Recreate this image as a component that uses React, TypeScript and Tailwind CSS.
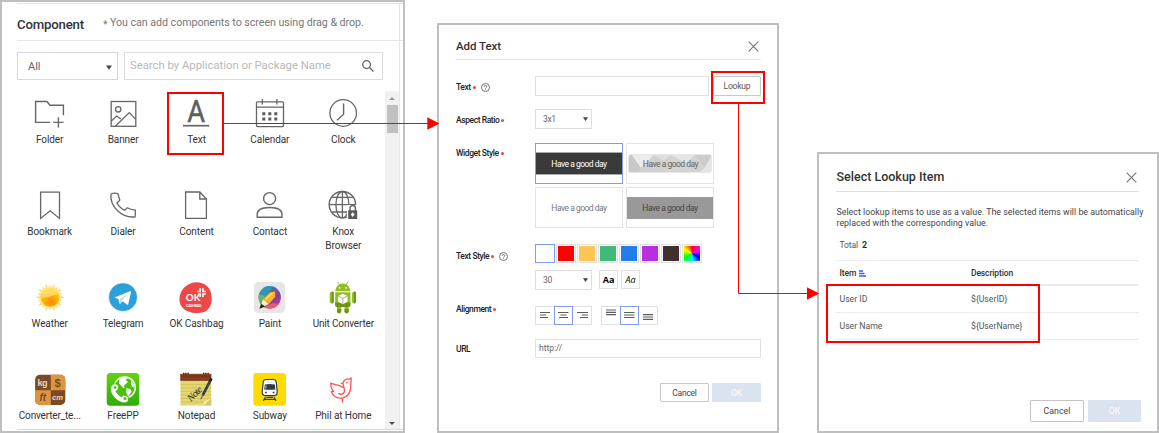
import React from "react";

const ROBOTO = "font-['Roboto','Liberation_Sans',sans-serif]";

function Icon({ children }: { children: React.ReactNode }) {
  return (
    <svg width="34" height="34" viewBox="0 0 34 34" fill="none" stroke="#666" strokeWidth="1.3" className="shrink-0 overflow-visible">
      {children}
    </svg>
  );
}

const rays = Array.from({ length: 20 }, (_, i) => {
  const a = (i * Math.PI) / 10;
  const r = i % 2 ? 12.6 : 14.6;
  const p = (rad: number, ang: number) => `${(17 + rad * Math.cos(ang)).toFixed(2)},${(17.3 + rad * Math.sin(ang)).toFixed(2)}`;
  return `${p(9.5, a - 0.15)} ${p(r, a)} ${p(9.5, a + 0.15)}`;
}).join(" ");

const apps: { label: string; icon: React.ReactNode; tracking?: string }[] = [
  {
    label: "Folder",
    icon: <path d="M17 26.4H2.6V5.5H14L17 9.3H30.4V19.3M20.3 26.4h10.2M25.4 21.2v10.4" strokeWidth="1.4" />,
  },
  {
    label: "Banner",
    icon: (
      <>
        <rect x="5.2" y="5.5" width="24.6" height="24.8" />
        <circle cx="12.2" cy="13.3" r="2.7" />
        <path d="M5 25.3l5.8-5.2 4 3M9.3 30.2l14-13.6 6.4 6.8" />
      </>
    ),
  },
  {
    label: "Text",
    icon: (
      <>
        <text x="8.2" y="26.4" fontSize="31.5" fontFamily="Roboto" fontWeight="400" fill="#5f5f5f" stroke="#5f5f5f" strokeWidth=".5" textLength="17.8" lengthAdjust="spacingAndGlyphs">A</text>
        <path d="M4 29.7h26.2" strokeWidth="1.7" />
      </>
    ),
  },
  {
    label: "Calendar",
    icon: (
      <>
        <rect x="3.5" y="5.8" width="27" height="24.8" rx="1" />
        <path d="M3.5 11.2h27M9.3 3v5.5M23.9 3v5.5" />
        <path d="M9.3 17.7h15M9.3 23h15" stroke="#5a5a5a" strokeWidth="3" strokeDasharray="3 3" />
      </>
    ),
  },
  {
    label: "Clock",
    icon: (
      <>
        <circle cx="17.2" cy="17" r="13.3" />
        <path d="M17.6 7.5v10.8L11 24.2" strokeWidth="1.4" />
      </>
    ),
  },
  { label: "Bookmark", icon: <path d="M7.6 4.2h18.9v26.2l-9.4-7.6-9.5 7.6z" /> },
  {
    label: "Dialer",
    icon: <path d="M5 6Q8.5 4.5 11.8 5.5L13.8 12.2 11 14.8Q13 19.5 18.6 22.4L21.3 19.8Q24 21.6 29.4 22.2L29.2 28.8C16 30.5 3.5 18.5 5 6Z" strokeLinejoin="round" />,
  },
  { label: "Content", icon: <path d="M6.6 4h14.2l6.6 7v19.4H6.6zM20.8 4v7h6.6" /> },
  {
    label: "Contact",
    icon: (
      <>
        <circle cx="16.6" cy="10.6" r="6" strokeWidth="1.4" />
        <path d="M4.2 29.3v-2.8c0-4.5 5-7 12.4-7s12.4 2.5 12.4 7v2.8z" strokeWidth="1.4" strokeLinejoin="round" />
      </>
    ),
  },
  {
    label: "Knox Browser",
    icon: (
      <>
        <circle cx="16.4" cy="16.7" r="13.2" strokeWidth="1.4" />
        <ellipse cx="16.4" cy="16.7" rx="6.5" ry="13.2" />
        <path d="M16.4 3.5v26.5M3.2 16.7h26.4M5.5 9.4h22M5.5 24h17" />
        <rect x="21" y="17" width="11" height="15" fill="#fff" stroke="none" />
        <path d="M24 23v-2.8a2.7 2.7 0 0 1 5.4 0v2.8" strokeWidth="1.5" />
        <rect x="22.2" y="22.3" width="9" height="8.7" fill="#5a5a5a" stroke="none" />
        <path d="M26.7 24.3l1.9 2.3-1.9 2.3-1.9-2.3z" fill="#fff" stroke="none" />
      </>
    ),
  },
  {
    label: "Weather",
    icon: (
      <>
        <defs>
          <radialGradient id="sun" cx="0.55" cy="0.75" r="0.75">
            <stop offset="0" stopColor="#ff8500" />
            <stop offset="0.5" stopColor="#ffb200" />
            <stop offset="1" stopColor="#ffd83a" />
          </radialGradient>
          <linearGradient id="glare" x1="0" y1="0" x2="0.2" y2="1">
            <stop offset="0" stopColor="#ffe564" />
            <stop offset="1" stopColor="#ffd05a" />
          </linearGradient>
        </defs>
        <g stroke="none">
          <polygon points={rays} fill="#f8d35a" />
          <circle cx="17" cy="17.3" r="10.8" fill="#ffe98b" />
          <circle cx="17" cy="17.3" r="9.4" fill="url(#sun)" />
          <path d="M8 17.5a9.2 9.2 0 0 1 18 -2.8c-6-1-9 4-18 2.800z" fill="url(#glare)" />
        </g>
      </>
    ),
  },
  {
    label: "Telegram",
    icon: (
      <g stroke="none">
        <circle cx="17" cy="17.6" r="15" fill="#eceff1" />
        <circle cx="17" cy="17.2" r="13.9" fill="#2ba0da" />
        <path d="M8.500 17.500L24 11.200c.8-.3 1.200 0 1 .9L22.300 24c-.2.9-.8 1-1.500.5l-4.200-3.200-2.100 2.100c-.5.5-1.100.3-1.200-.4l-.9-4.100-3.800-1.100c-.5-.1-.5-.2-.1-.3z" fill="#fff" />
        <path d="M13.300 22.900l.5-3.800 8-5.400-6 6.700-1.100 3.100c-.5.5-1.300.1-1.400-.6z" fill="#b9d9ea" />
      </g>
    ),
  },
  {
    label: "OK Cashbag",
    icon: (
      <g stroke="none">
        <path d="M17 2.200C25 2 32.500 7 32.600 17c.1 7.500-1.500 12-7 14.800C17 35 3 32.500.7 22 -1 11 8 2.400 17 2.200z" fill="#ee4747" />
        <text x="6.8" y="21.2" fontSize="10" fontFamily="Lato" fontWeight="700" fill="#fff" textLength="14.5" lengthAdjust="spacingAndGlyphs">OK</text>
        <text x="7" y="26.5" fontSize="3.9" fontFamily="Roboto" fontWeight="500" fill="#fff" textLength="15.5">CASHBAG</text>
        <path d="M21.200 8.200v3.300h-3M23.900 8.200v3.300h3M21.200 17v-3h-2.300M23.900 17v-3h3" stroke="#fff" strokeWidth="1.6" />
      </g>
    ),
  },
  {
    label: "Paint",
    icon: (
      <g stroke="none">
        <defs>
          <linearGradient id="paint-a" x1="0" y1="0" x2="1" y2="1">
            <stop offset="0" stopColor="#2d9fc0" />
            <stop offset="0.35" stopColor="#4d70a8" />
            <stop offset="0.65" stopColor="#8a3d9c" />
            <stop offset="1" stopColor="#e0427c" />
          </linearGradient>
        </defs>
        <rect x="1" y="2" width="31" height="31" rx="4.5" fill="#e6e6e6" />
        <circle cx="16.7" cy="17.3" r="11.2" fill="url(#paint-a)" />
        <path d="M6.200 13.800A11.200 11.200 0 0 1 20 6.600L13 17z" fill="#2f9bb8" opacity=".8" />
        <path d="M6 14.500l6 1-4 8.500A11.200 11.200 0 0 1 6 14.500z" fill="#65b66c" />
        <path d="M11 27l9-4 6 1a11.200 11.200 0 0 1-15 3z" fill="#ee5a72" />
        <path d="M7 28.300l3-9.400 6 5z" fill="#fff0b5" />
        <path d="M10 18.900l7.300-6.700 4.700-.7.300 5.200-6.300 7.200-1.600-2-2.200-.8z" fill="#ffb320" />
        <path d="M12.600 19.300l7-6.500" stroke="#ffe46c" strokeWidth="1.3" />
        <path d="M6.400 28.700l1.700-5 4 2.800z" fill="#202020" />
      </g>
    ),
  },
  {
    label: "Unit Converter",
    tracking: "tracking-[-0.17px]",
    icon: (
      <g stroke="none" fill="#94bf24">
        <path d="M9.200 11.200a7.600 7.800 0 0 1 15.200 0z" />
        <path d="M12 2.300l2 3.200M21.600 2.300l-2 3.200" stroke="#94bf24" strokeWidth="1" strokeLinecap="round" />
        <path d="M9.200 12.300h15.200v13a1.800 1.800 0 0 1-1.800 1.800H11a1.800 1.800 0 0 1-1.800-1.800z" />
        <rect x="3.7" y="11.5" width="4" height="12" rx="2" />
        <rect x="26" y="11.5" width="4" height="12" rx="2" />
        <rect x="11" y="25" width="4.2" height="8.3" rx="2" />
        <rect x="18.5" y="25" width="4.2" height="8.3" rx="2" />
        <path d="M9.200 22.500h15.200v2.800a1.800 1.800 0 0 1-1.800 1.800H11a1.800 1.800 0 0 1-1.800-1.800zM5.800 11.800h1.900v9.600a2 2 0 0 1-1.900 2zM28 11.800h2v9.600a2 2 0 0 1-2 2zM11 29h4.200v2.300a2 2 0 0 1-4.200 0zM18.500 29h4.200v2.300a2 2 0 0 1-4.200 0z" fill="#6c9416" />
        <circle cx="13.5" cy="7.9" r=".8" fill="#fff" />
        <circle cx="20.1" cy="7.9" r=".8" fill="#fff" />
        <path d="M16.800 13.700l4.700 2.200v5.900l-4.700 2.500-4.700-2.500v-5.900z" fill="#fff" />
        <path d="M12.100 16l4.700 2.400 4.700-2.400M16.800 18.400v5.700" stroke="#9ba886" strokeWidth=".9" fill="none" />
      </g>
    ),
  },
  {
    label: "Converter_te...",
    tracking: "tracking-[-0.17px]",
    icon: (
      <g stroke="none">
        <defs>
          <clipPath id="conv"><rect x="2.1" y="2.8" width="30.2" height="30.2" rx="5" /></clipPath>
        </defs>
        <g clipPath="url(#conv)">
          <rect x="2" y="2" width="31" height="31" fill="#7a4a26" />
          <path d="M17.800 2H33v16.200H17.800zM2 18.200h15.800V33H2z" fill="#dc963f" />
        </g>
        <g fontFamily="Liberation Sans" fontWeight="700">
          <text x="4.6" y="13.6" fontSize="9" fill="#ead7bd" textLength="10">kg</text>
          <text x="21.4" y="15.2" fontSize="11" fill="#7a4a26">$</text>
          <text x="6.5" y="29" fontSize="10" fontStyle="italic" fill="#7a4a26">ft</text>
          <text x="19" y="28" fontSize="8" fontStyle="italic" fill="#ead7bd" textLength="11" lengthAdjust="spacingAndGlyphs">cm</text>
        </g>
      </g>
    ),
  },
  {
    label: "FreePP",
    icon: (
      <g stroke="none">
        <defs>
          <linearGradient id="fpp" x1="0" y1="0" x2="0" y2="1">
            <stop offset="0" stopColor="#65d30b" />
            <stop offset="1" stopColor="#2fac0a" />
          </linearGradient>
        </defs>
        <rect x=".7" y="1" width="32.6" height="32.7" rx="3.5" fill="url(#fpp)" />
        <circle cx="18.7" cy="15.6" r="10.6" stroke="#fff" strokeWidth="1.4" fill="#4cc00a" />
        <path d="M13.500 7.200l4-1.800 4 .6-1.800 2.200 2.500 1.600-3.300 3-1.400 1.400 2 1.800-2.600-.4-3.800-4zM20.500 16l4.200 1.200.8 2.600-3.300 4.600-2-4zM25 8l3 4.500-.5 3.500-2.200-2.800z" fill="#fff" />
        <path d="M5 14.500q1.500-3.500 5.500-2.500l2 2-.7 4.200-2 1c1.300 2.600 3.300 4.500 6 5.600l1.800-1.700 4.600 1.300.3 3.600c-2 5-9 2.500-13-1.300S3.500 18.500 5 14.500z" fill="#fff" stroke="#3fb509" strokeWidth=".8" />
        <circle cx="9" cy="15.6" r="1.4" fill="#4cc00a" />
        <circle cx="19" cy="26.6" r="1.5" fill="#4cc00a" />
      </g>
    ),
  },
  {
    label: "Notepad",
    icon: (
      <g stroke="none">
        <rect x="1.5" y="3" width="30.7" height="30.5" fill="#e3d56f" />
        <path d="M1.500 12.500h30.700M1.500 16h30.700M1.500 19.500h30.700M1.500 23h30.700M1.500 26.500h30.700M1.500 30h25" stroke="#cfbf59" strokeWidth=".7" />
        <path d="M24.500 33.500l.5-3.800 7.200-3.700v7.500z" fill="#f8f0b2" />
        <path d="M24.500 33.500l7.700-7.500v7.500z" fill="#d5c765" />
        <rect x="1.3" y="1.8" width="31" height="7" fill="#7b351a" />
        <path d="M1.300 2.500h31M1.300 6.500h31" stroke="#96502c" strokeWidth=".7" />
        <path d="M4 1.500h6M24 1.500h6" stroke="#3c2a22" strokeWidth="1.5" strokeDasharray="1.2 .5" />
        <text x="12" y="30" fontSize="10" fontFamily="Liberation Serif" fontStyle="italic" fill="#29251a" transform="rotate(-45 12 30)" textLength="17">Note</text>
        <path d="M32.500 6.300L23.600 23.500" stroke="#1f252b" strokeWidth="2.600" />
        <path d="M24.400 22l-2.700 5.300" stroke="#666" strokeWidth="1.2" />
        <path d="M31 9.500l-6 11.500" stroke="#727b82" strokeWidth=".6" />
      </g>
    ),
  },
  {
    label: "Subway",
    icon: (
      <g stroke="none">
        <rect x=".3" y="1" width="32.7" height="32.7" rx="3" fill="#ffdc00" />
        <path d="M10.400 28.700l1.900-3.500M23 28.700l-1.900-3.500M11 27.300h11.500" stroke="#343a46" strokeWidth="1.3" />
        <path d="M13 7.500h7.500q2.400 0 2.700 2.500l1 9.700q.2 3.600-3 3.900h-9q-3.200-.3-3-3.900l1-9.700q.4-2.500 2.800-2.500z" fill="#fff" stroke="#343a46" strokeWidth="1.2" />
        <path d="M11.800 12.400q5-1 10 0l.6 5q-5.600.8-11.200 0z" fill="#343a46" />
        <path d="M13 13.500l-.3 3M14 10h5.500" stroke="#d3d4d5" strokeWidth=".9" />
        <path d="M12 20.500h1.800M19.700 20.500h1.800" stroke="#343a46" strokeWidth="1.4" />
        <path d="M13.500 25.400h6.500" stroke="#343a46" strokeWidth="1.2" />
      </g>
    ),
  },
  {
    label: "Phil at Home",
    icon: (
      <g stroke="#ff5252" strokeWidth="1.3" strokeLinejoin="round" strokeLinecap="round">
        <path d="M17 15.500c-3.500-3-8-2.500-12.300-4.300 0 3.500.7 6 3 8-1 .5-1.700.5-2.400.4 1.500 5 6.500 7.300 11.500 6.200 6-1.500 8.300-6.500 8-13.300 0-2.500.5-4 .3-6.500-1 1-1.600 1.200-2.900 1.100-3-.2-5.200 1.700-5.200 4.400 0 2.700 2.300 5 1.300 8.200-1 2.500-3.300 3.100-5.600 2M16.500 26.200v3.900M16.800 11.300h-1.600" />
        <circle cx="21" cy="10.5" r=".3" />
      </g>
    ),
  },
];

function Caret() {
  return (
    <svg width="6" height="5" viewBox="0 0 6 5" className="shrink-0">
      <path d="M0 .5h6L3 4.700z" fill="#444" />
    </svg>
  );
}

function CloseIcon() {
  return (
    <svg width="11" height="11" viewBox="0 0 11 11" stroke="#777" strokeWidth="1.2" className="shrink-0">
      <path d="M.7.700l9.600 9.600M10.300.7L.7 10.300" />
    </svg>
  );
}

function ComponentPanel() {
  return (
    <section className="h-[433px] w-[405px] shrink-0 border-2 border-[#bfbfbf] bg-white pt-px">
      <div className="ml-[15px] h-[38px] border-y border-[#e4e4ea]">
        <div className="flex h-full w-[383px] items-center border-r border-[#e4e4ea]">
          <h1 className="w-[86px] pt-[5px] text-[13.2px] font-medium leading-4 tracking-[-0.18px] text-[#333]">Component</h1>
          <p className="flex pt-[3px] text-[10.7px] leading-4 tracking-[-0.05px] text-[#777]">
            <span className="w-[7px] pt-[2px]">*</span>You can add components to screen using drag &amp; drop.
          </p>
        </div>
      </div>
      <div className="ml-[15px] h-[389px] border-b border-[#d9d9d9]">
        <div className="h-full w-[383px] border-r border-[#e8e8ec] pt-[11px]">
          <div className="flex gap-[6px]">
            <div className="flex h-7 w-[101px] items-center justify-between border border-[#d5d5e3] pl-[10px] pr-[5px] pt-[2px] text-[11px] text-[#666]">
              All <Caret />
            </div>
            <div className="flex h-7 w-[259px] items-center justify-between border border-[#dcdce0] pl-[5px] pr-2 text-[11.3px] text-[#b8b8b8]">
              <span>Search by Application or Package Name</span>
              <svg width="12" height="12" viewBox="0 0 12 12" fill="none" stroke="#666" strokeWidth="1.3">
                <circle cx="4.6" cy="4.6" r="3.9" />
                <path d="M7.500 7.500l4 4" />
              </svg>
            </div>
          </div>
          <div className="mt-[11px] flex h-[338px] justify-between overflow-hidden">
            <div className="-ml-1 grid w-[367px] shrink-0 auto-rows-[92px] grid-cols-5">
              {apps.map((a) => (
                <div key={a.label} className="flex flex-col items-center pt-[5px]">
                  <Icon>{a.icon}</Icon>
                  <span className={`mt-[3px] text-center text-[10px] leading-[14px] text-[#333] ${a.label === "Knox Browser" ? "w-[50px]" : "whitespace-nowrap"} ${a.tracking ?? "tracking-[-0.08px]"}`}>{a.label}</span>
                </div>
              ))}
            </div>
            <div className="flex w-[14px] shrink-0 flex-col items-center bg-[#f1f1f1] pb-[4px] pt-[6px]">
              <svg width="6" height="3" viewBox="0 0 6 3"><path d="M0 3L3 0l3 3z" fill="#999" /></svg>
              <div className="mt-[5px] h-7 w-[11px] bg-[#c1c1c1]" />
              <svg width="6" height="3" viewBox="0 0 6 3" className="mt-auto"><path d="M0 0l3 3 3-3z" fill="#505050" /></svg>
            </div>
          </div>
        </div>
      </div>
    </section>
  );
}

function FieldLabel({ children, required = true, help = false }: { children: string; required?: boolean; help?: boolean }) {
  return (
    <div className="flex w-[79px] shrink-0 items-center text-[8.5px] font-medium leading-[12px] tracking-[-0.42px] text-[#222]">
      <span className="whitespace-nowrap">{children}</span>
      {required && <span className="ml-[2px] size-[3px] rounded-full bg-[#f04040]" />}
      {help && (
        <svg width="9" height="9" viewBox="0 0 9 9" fill="none" stroke="#555" strokeWidth=".8" className="ml-[5px] mt-[1px]">
          <circle cx="4.5" cy="4.5" r="4" />
          <path d="M3.200 3.700a1.300 1.200 0 1 1 1.900 1c-.4.200-.6.400-.6.800M4.500 6.300v.8" />
        </svg>
      )}
    </div>
  );
}

function SizeSelect({ children }: { children: string }) {
  return (
    <div className="flex h-5 w-[57px] items-center justify-between border border-[#dedee2] pl-[7px] pr-[3px] text-[8.5px] tracking-[-0.35px] text-[#666]">
      {children}
      <svg width="5" height="4" viewBox="0 0 5 4"><path d="M0 .3h5L2.500 4z" fill="#444" /></svg>
    </div>
  );
}

const swatches = ["bg-[#ff0000]", "bg-[#ffc555]", "bg-[#41b97a]", "bg-[#217ee8]", "bg-[#b92fe0]", "bg-[#42302f]", "bg-[conic-gradient(red,magenta,blue,cyan,lime,yellow,red)]"];

const alignIcons = [
  "M0 4.500h10M0 7h6M0 9.500h8",
  "M0 4.500h10.500M2.500 7h6M1 9.500h9",
  "M0 4.500h11M5 7h6M3 9.500h8",
  "M0 2h10M0 4.300h10M0 6.600h10",
  "M0 4.500h10.500M0 7h10.500M0 9.500h10.500",
  "M0 6.600h10M0 9h10M0 11.400h10",
];

function AlignGroup({ icons }: { icons: string[] }) {
  return (
    <div className="flex">
      {icons.map((d, i) => (
        <div key={d} className={`flex h-[19px] w-[19px] items-center justify-center border ${i === 1 ? "border-[#7f9aef]" : "border-[#e0e0e0]"} ${i === 0 ? "border-r-0" : ""} ${i === 2 ? "border-l-0" : ""}`}>
          <svg width="11" height="15" viewBox="0 0 11 15" stroke="#5c5c5c" strokeWidth="1.2"><path d={d} /></svg>
        </div>
      ))}
    </div>
  );
}

function FacetedBanner() {
  return (
    <div className="grid h-[19px] w-[84px] place-items-center overflow-hidden rounded-[3px] border border-[#e6e6e6] bg-[#d4d4d4]">
      <svg width="83" height="18" viewBox="0 0 83 18" className="col-start-1 row-start-1">
        <path d="M0 0h3l9 13-3 5H0z" fill="#c8c8c8" />
        <path d="M3 0h22L12 13z" fill="#ececec" />
        <path d="M25 0h17l-6 18H9l3-5z" fill="#d0d0d0" />
        <path d="M25 0l10 6 7-6z" fill="#dedede" />
        <path d="M42 0h24l-9 8z" fill="#e6e6e6" />
        <path d="M57 8l9-8 10 12-6 6H50z" fill="#d2d2d2" />
        <path d="M66 0h17l-7 12z" fill="#cbcbcb" />
        <path d="M76 12l7-12v18H70z" fill="#e4e4e4" />
      </svg>
      <span className="z-10 col-start-1 row-start-1">Have a good day</span>
    </div>
  );
}

function AddTextDialog() {
  return (
    <section className="ml-8 h-[410px] w-[342px] shrink-0 border-2 border-[#bfbfbf] bg-white pl-[17px] pr-4">
      <header className="flex h-[35px] items-center justify-between border-b border-[#e4e4ea] pr-[2px] pt-[8px]">
        <h2 className="text-[11.5px] font-medium leading-4 tracking-[-0.05px] text-[#333]">Add Text</h2>
        <CloseIcon />
      </header>
      <div className="mt-4 flex items-center">
        <div className="pt-[2px]"><FieldLabel help>Text</FieldLabel></div>
        <div className="h-5 w-[174px] border border-[#e0e0e4]" />
        <button className="ml-1 h-5 w-12 rounded-[1px] border border-[#c8c8c8] pt-px text-[8.5px] tracking-[-0.2px] text-[#555]">Lookup</button>
      </div>
      <div className="mt-[13px] flex items-center">
        <div className="pt-[2px]"><FieldLabel>Aspect Ratio</FieldLabel></div>
        <SizeSelect>3x1</SizeSelect>
      </div>
      <div className="mt-[14px] flex items-start">
        <div className="pt-1"><FieldLabel>Widget Style</FieldLabel></div>
        <div className="grid grid-cols-[88px_88px] gap-[3px] text-[8.5px] leading-3 tracking-[-0.5px] text-[#777]">
          <div className="flex h-[41px] items-center border border-[#7f9aef]">
            <div className="flex h-[23px] w-full items-center justify-center border-y border-[#aaa] bg-[#3a3a3a] text-white">Have a good day</div>
          </div>
          <div className="flex h-[41px] items-center justify-center border border-[#e4e4e4] text-[#666]"><FacetedBanner /></div>
          <div className="flex h-[41px] items-center justify-center border border-[#e4e4e4]">Have a good day</div>
          <div className="flex h-[41px] items-center border border-[#e4e4e4]">
            <div className="flex h-[22px] w-full items-center justify-center bg-[#999] text-[#444]">Have a good day</div>
          </div>
        </div>
      </div>
      <div className="mt-[16px] flex items-start">
        <div className="pt-[6px]"><FieldLabel help>Text Style</FieldLabel></div>
        <div>
          <div className="flex gap-px">
            <div className="h-[19px] w-5 border border-[#7f9aef]" />
            {swatches.map((c) => (
              <div key={c} className="h-[19px] w-5 border border-[#e0e0e0] p-px"><div className={`h-full w-full ${c}`} /></div>
            ))}
          </div>
          <div className="mt-[7px] flex">
            <SizeSelect>30</SizeSelect>
            <div className="ml-[7px] flex h-[19px] w-[19px] items-center justify-center border border-[#e0e0e0] font-['Open_Sans',sans-serif] text-[9px] font-bold text-black">Aa</div>
            <div className="ml-[3px] flex h-[19px] w-[19px] items-center justify-center border border-[#e0e0e0] font-['Open_Sans',sans-serif] text-[9px] italic text-black">Aa</div>
          </div>
        </div>
      </div>
      <div className="mt-[16px] flex items-start">
        <div className="-mt-[3px]"><FieldLabel>Alignment</FieldLabel></div>
        <div className="flex gap-[9px]">
          <AlignGroup icons={alignIcons.slice(0, 3)} />
          <AlignGroup icons={alignIcons.slice(3)} />
        </div>
      </div>
      <div className="mt-[14px] flex items-center">
        <FieldLabel required={false}>URL</FieldLabel>
        <div className="flex h-[19px] w-[226px] items-center border border-[#e0e0e4] pl-[3px] text-[8.5px] text-[#666]">http://</div>
      </div>
      <div className="mt-[25px] flex justify-end gap-[3px] text-[8.5px] tracking-[-0.25px]">
        <button className="h-[19px] w-[49px] rounded-[1px] border border-[#c8c8c8] pt-px text-[#444]">Cancel</button>
        <button className="h-[19px] w-[49px] rounded-[1px] bg-[#dae4f0] pt-px font-medium text-[#f4f7fb]">OK</button>
      </div>
    </section>
  );
}

function LookupDialog() {
  return (
    <section className="ml-[38px] h-[281px] w-[342px] shrink-0 border-2 border-[#bfbfbf] bg-white pl-[17px]">
      <header className="flex h-[38px] w-[303px] items-center justify-between border-b border-[#dedee4] pr-[2px] pt-[9px]">
        <h2 className="pl-[0.5px] text-[12.5px] font-medium leading-4 text-[#333]">Select Lookup Item</h2>
        <CloseIcon />
      </header>
      <p className="mt-[15px] w-[320px] whitespace-nowrap pl-[0.5px] text-[8.8px] leading-[11px] tracking-[0.025px] text-[#444]">
        Select lookup items to use as a value. The selected items will be automatically<br />replaced with the corresponding value.
      </p>
      <div className="mt-[10px] flex items-center gap-1 pl-[3.5px] text-[8.5px] leading-3 text-[#555]">
        <span className="tracking-[-0.1px]">Total</span> <b className="text-[9px] text-[#24324a]">2</b>
      </div>
      <div className="mt-[9px] w-[303px] text-[8.7px] text-[#555]">
        <div className="grid h-[26px] grid-cols-[131.500px_1fr] items-center border-b-2 border-t border-[#ececec] pl-[3.5px] pt-[2px] text-[8.5px] font-medium tracking-[-0.13px] text-[#333]">
          <div className="flex items-center gap-[3px]">
            Item
            <svg width="7" height="7" viewBox="0 0 7 7" stroke="#3b62e0" strokeWidth="1.3"><path d="M0 1h4M0 3.500h5.500M0 6h7" /></svg>
          </div>
          <span>Description</span>
        </div>
        <div className="grid h-[27px] grid-cols-[131.500px_1fr] items-center border-b border-[#ececec] pl-[3.5px] pt-px"><span>User ID</span><span>{"${UserID}"}</span></div>
        <div className="grid h-[27px] grid-cols-[131.500px_1fr] items-center border-b border-[#ececec] pl-[3.5px] pt-px"><span>User Name</span><span>{"${UserName}"}</span></div>
      </div>
      <div className="mt-[60px] flex w-[305px] justify-end gap-1 text-[8.8px]">
        <button className="h-[22px] w-[54px] rounded-[1px] border border-[#c4c4c4] pt-px text-[#444]">Cancel</button>
        <button className="h-[22px] w-[53px] rounded-[1px] bg-[#dae4f0] pt-px font-medium text-[#f4f7fb]">OK</button>
      </div>
    </section>
  );
}

function FlowArrows() {
  return (
    <svg width="1159" height="433" viewBox="0 0 1159 433" className="pointer-events-none absolute left-0 top-0" fill="none" stroke="#f00">
      <g strokeWidth="2">
        <rect x="168" y="93" width="55" height="61" />
        <rect x="712" y="72" width="52" height="31" />
        <rect x="827" y="285" width="212" height="57" />
      </g>
      <path d="M224 123.500h204M738.500 104v189.500H808" />
      <path d="M427.300 117.300L439.500 123.500 427.300 129.800zM807 287.300L819.200 293.500 807 299.700z" fill="#f00" stroke="none" />
    </svg>
  );
}

export default function App() {
  return (
    <main className={`relative flex h-[433px] w-[1159px] items-end overflow-hidden bg-white ${ROBOTO}`}>
      <ComponentPanel />
      <AddTextDialog />
      <LookupDialog />
      <FlowArrows />
    </main>
  );
}
